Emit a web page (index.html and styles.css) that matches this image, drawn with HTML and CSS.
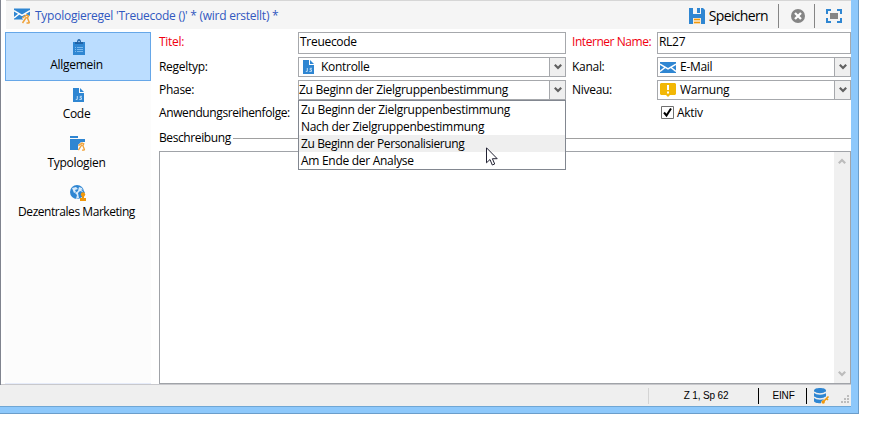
FILE: index.html
```html
<!DOCTYPE html>
<html lang="de">
<head>
<meta charset="utf-8">
<title>Typologieregel</title>
<link rel="stylesheet" href="styles.css">
</head>
<body>
<svg class="defs" width="0" height="0">
  <symbol id="tool" viewBox="0 0 9 10"><path d="M1 4 5 1l2 1-1 2 2 5M5 3 1 9M5 9h3" fill="none" stroke="#f0a33c" stroke-width="1.5"/></symbol>
  <symbol id="js" viewBox="0 0 11 14"><path d="M0 0h6v5h5v9H0z" fill="#2f86d2"/><path d="M7 0l4 4H7z" fill="#2f86d2"/><path d="M4.3 8v3.4H2.8M9 8.3H7.2v1.5h1.3v1.6H6.3" fill="none" stroke="#cfe6fa" stroke-width=".9"/></symbol>
  <symbol id="mail" viewBox="0 0 16 11"><path d="M0 0h16v11H0z" fill="#2f86d2"/><path d="M0 2.200l8 4.600 8-4.600M0 9.500l5-4M16 9.500l-5-4" fill="none" stroke="#fff" stroke-width="1.500"/></symbol>
  <symbol id="chev" viewBox="0 0 8 6"><path d="M.8.8 4 4 7.200.8" fill="none" stroke="currentColor" stroke-width="2.200"/></symbol>
</svg>
<div class="window">
  <div class="client">
    <header class="toolbar">
      <svg class="title-icon" width="17" height="16" viewBox="0 0 17 16"><use href="#mail" width="16" height="12"/><path d="M8 10l4-3 5 1v8h-5z" fill="#f5f5f5"/><use href="#tool" x="7.500" y="6" width="9" height="10"/></svg>
      <h1 class="title">Typologieregel 'Treuecode ()' * (wird erstellt) *</h1>
      <svg class="save-icon" width="16" height="16" viewBox="0 0 16 16"><path d="M0 0h4v6h8V0h2l2 2v14h-4v-6H4v6H0z" fill="#2f86d2"/><path d="M8 0h3v5H8z" fill="#2f86d2"/><path d="M4 10h8v6H4z" fill="#fbead0"/><path d="M5 11.500h6M5 14.500h6" stroke="#f0980c" stroke-width="1.400"/></svg>
      <span class="save">Speichern</span>
      <i class="divider"></i>
      <svg class="cancel" width="14" height="14" viewBox="0 0 14 14"><circle cx="7" cy="7" r="7" fill="#858585"/><path d="M4 4l6 6M10 4l-6 6" stroke="#fff" stroke-width="2.300"/></svg>
      <i class="divider"></i>
      <svg class="full" width="16" height="14" viewBox="0 0 16 14"><path d="M1 5V1h4M11 1h4v4M15 9v4h-4M5 13H1V9" fill="none" stroke="#2f86d2" stroke-width="2"/><path d="M4 4h8v6H4z" fill="#858585"/></svg>
    </header>
    <main class="body">
      <nav class="sidebar">
        <a class="nav on"><svg width="12" height="16" viewBox="0 0 12 16"><path d="M0 3h12v13H0z" fill="#2f86d2"/><path d="M2 3h2c0-4 4-4 4 0h2v2H2z" fill="#1f62a6"/><circle cx="6" cy="2.500" r=".8" fill="#bbddff"/><path d="M2 8.500h1M4 8.500h6M2 10.500h1M4 10.500h6M2 12.500h1M4 12.500h6" stroke="#7ab8ee"/></svg><span>Allgemein</span></a>
        <a class="nav"><svg width="11" height="14"><use href="#js"/></svg><span>Code</span></a>
        <a class="nav high"><svg width="16" height="15" viewBox="0 0 16 15"><path d="M0 0h8v2H0zM0 3h15v11H0z" fill="#2f86d2"/><path d="M8 9l3-3h5v9H8z" fill="#fcfcfc"/><use href="#tool" x="7.500" y="6" width="8" height="9"/></svg><span>Typologien</span></a>
        <a class="nav high"><svg width="16" height="16" viewBox="0 0 16 16"><circle cx="7" cy="7" r="7" fill="#2f86d2"/><path d="M2 3l4-1 2 2-3 1 1 2-2 1zM9 2l3 1 1 4-3-1-2 2 1 5-3 1 1-4-2-2 3-2z" fill="#d8eafa"/><path d="M11.500 5l3 2-1 1.500M3 9l2 2v2" stroke="#2f86d2" fill="none"/><circle cx="13" cy="9.500" r="2.200" fill="#f0980c"/><path d="M12 10h2v3h2v3h-6v-3h2z" fill="#f0980c"/></svg><span class="tight">Dezentrales Marketing</span></a>
      </nav>
      <section class="form">
        <div class="fields">
          <label class="req r1">Titel:</label>
          <div class="input">Treuecode</div>
          <label class="req r1 right tight">Interner Name:</label>
          <div class="input">RL27</div>

          <label>Regeltyp:</label>
          <div class="combo"><svg class="js" width="11" height="14"><use href="#js"/></svg><span class="val">Kontrolle</span><b><svg width="8" height="6"><use href="#chev"/></svg></b></div>
          <label class="right">Kanal:</label>
          <div class="combo"><svg class="ico" width="16" height="11"><use href="#mail"/></svg><span class="val">E-Mail</span><b><svg width="8" height="6"><use href="#chev"/></svg></b></div>

          <label>Phase:</label>
          <div class="combo open"><span class="val">Zu Beginn der Zielgruppenbestimmung</span><b><svg width="8" height="6"><use href="#chev"/></svg></b>
            <ul class="list"><li>Zu Beginn der Zielgruppenbestimmung</li><li>Nach der Zielgruppenbestimmung</li><li class="hot">Zu Beginn der Personalisierung</li><li>Am Ende der Analyse</li></ul>
            <svg class="cursor" width="12" height="19" viewBox="0 0 12 19"><path d="M.5.8v15l3.500-3.300 2.300 5.500 2.400-1-2.300-5.300h4.800z" fill="#fff" stroke="#223"/></svg>
          </div>
          <label class="right">Niveau:</label>
          <div class="combo"><svg class="ico" width="16" height="14" viewBox="0 0 16 14"><path d="M1 0h14l1 1v10l-1 1h-5l-2 2-2-2H1l-1-1V1z" fill="#f2b705"/><path d="M8 2v5M8 8.500v2" stroke="#fff" stroke-width="2"/></svg><span class="val">Warnung</span><b><svg width="8" height="6"><use href="#chev"/></svg></b></div>

          <label class="order">Anwendungsreihenfolge:</label>
          <div class="check"><svg width="13" height="13" viewBox="0 0 13 13"><path d="M.5.5h12v12H.5z" fill="#fff" stroke="#707070"/><path d="M3 6.500l2.500 3 4.500-7" fill="none" stroke="#000" stroke-width="2"/></svg><span>Aktiv</span></div>
        </div>
        <div class="legend"><span>Beschreibung</span><i></i></div>
        <div class="area"><div class="scroll"><svg class="up" width="8" height="6"><use href="#chev"/></svg><svg width="8" height="6"><use href="#chev"/></svg></div></div>
      </section>
    </main>
    <footer class="status">
      <span class="pos">Z 1, Sp 62</span><span class="mode">EINF</span>
      <svg class="db" width="16" height="16" viewBox="0 0 16 16"><path d="M0 2.500C0-.8 12-.8 12 2.500V13c0 3-12 3-12 0z" fill="#2f86d2"/><path d="M0 4c2 2.500 10 2.500 12 0M0 9c2 2.500 10 2.500 12 0" fill="none" stroke="#efefef" stroke-width="1.500"/><path d="M7 14l6-6h3v5l-5 3H7z" fill="#efefef"/><path d="M9 14l5.500-5.500M12.500 10.500l1.500 1.500" stroke="#f0980c" stroke-width="1.600"/><circle cx="9.200" cy="14" r="1.700" fill="#f0980c"/></svg>
      <svg class="grip" width="8" height="8" viewBox="0 0 8 8"><path d="M6 0h2v2H6zM3 3h2v2H3zM6 3h2v2H6zM0 6h2v2H0zM3 6h2v2H3zM6 6h2v2H6z" fill="#bcbcbc"/></svg>
    </footer>
  </div>
</div>
</body>
</html>
```
FILE: styles.css
```css
* { box-sizing: border-box; }
body { margin: 0; background: #fff; color: #000; font: 12px/16px "Open Sans", "Noto Sans", sans-serif; letter-spacing: -0.29px; overflow: hidden; }
svg { display: block; flex: none; }
.defs { position: absolute; }
.window { width: 859px; height: 414px; padding: 0 7px 7px 0; background: #8dc8fb; border: solid #6b9dca; border-width: 0 1px 1px 0; }
.client { width: 851px; height: 407px; display: flex; flex-direction: column; background: #fff; border-bottom: 1px solid #6fa6d4; }
.toolbar { display: flex; align-items: center; height: 29px; padding: 1px 9px 0 8px; margin-left: 6px; background: #f5f5f5; border-top: 1px solid #d6d6d6; position: relative; }
.toolbar::before { content: ""; position: absolute; left: -6px; top: -1px; width: 1px; height: 385px; background: #80848f; }
.title { margin: 0 auto 0 4px; font-size: 12px; font-weight: 400; color: #3158c0; white-space: nowrap; letter-spacing: -0.25px; }
.save { margin-left: 4px; margin-right: 10px; font-size: 14px; letter-spacing: -0.65px; }
.divider { width: 1px; height: 24px; background: #858585; }
.cancel { margin: 0 10px 0 12px; position: relative; }
.cancel + .divider { margin-left: -1px; }
.full { margin-left: 11px; }
.body { display: flex; height: 355px; padding-top: 3px; }
.sidebar { width: 146px; margin-left: 5px; height: 352px; background: #fcfcfc; border-bottom: 1px solid #e6ecfa; }
.nav { display: flex; flex-direction: column; align-items: center; height: 49px; padding-top: 7px; border: 0 solid transparent; }
.nav svg { margin-bottom: 2px; }
.nav span { margin-top: auto; margin-bottom: 8px; padding-right: 3px; }
.nav.high { padding-top: 6px; }
.nav.on { padding-top: 6px; background: #bbddff; border: 1px solid #66a7e8; }
.nav.on svg { margin-left: 2px; }
.form { width: 692px; margin-left: 8px; }
.fields { display: grid; grid-template-columns: 139px 268px 91px 194px; grid-template-rows: 22px 20px 20px 18px; row-gap: 3px; }
label { align-self: center; white-space: nowrap; }
.right { padding-left: 6px; }
.req { color: #f00010; }
.tight { letter-spacing: -0.45px; }
.order { letter-spacing: -0.39px; padding-top: 1px; }
.r1 { align-self: start; padding-top: 2px; }
.input { border: 1px solid #a6a8ac; padding: 1px 2px 1px 1px; }
.combo { position: relative; display: flex; align-items: center; border: 1px solid #a6a8ac; white-space: nowrap; }
.combo b { margin-left: auto; width: 16px; height: 18px; border-left: 1px solid #a6a8ac; background: #efefef; display: grid; place-items: center; color: #606060; }
.ico { margin: 0 4px 0 2px; }
.js { margin: 0 7px 0 4px; }
.list { position: absolute; z-index: 2; left: -1px; top: 19px; width: 268px; height: 70px; margin: 0; padding: 0; list-style: none; background: #fff; border: 1px solid #828790; }
.list li { height: 17px; line-height: 17px; padding-left: 2px; }
.list .hot { background: #efefef; letter-spacing: -0.38px; }
.cursor { position: absolute; z-index: 3; left: 187px; top: 66px; }
.check { grid-column: 4; display: flex; align-items: center; gap: 3px; padding: 1px 0 0 4px; }
.legend { display: flex; align-items: center; height: 16px; margin-top: 9px; }
.legend i { flex: 1; height: 1px; background: #a0a0a0; margin-left: 2px; }
.legend span { letter-spacing: -0.4px; }
.area { height: 233px; margin-top: 5px; border: 1px solid #a0a3a8; display: flex; justify-content: flex-end; }
.scroll { width: 16px; background: #f0f0f0; color: #bcbcbc; display: flex; flex-direction: column; align-items: center; justify-content: space-between; padding: 6px 0; }
.up { transform: rotate(180deg); }
.status { display: flex; align-items: center; height: 22px; background: #efefef; border-top: 1px solid #c8c8cc; font: 10px/16px "Liberation Sans", Arial, sans-serif; letter-spacing: -0.15px; }
.pos { width: 111px; margin-left: 648px; padding-left: 5px; border-left: 1px solid #d4d4d4; border-right: 1px solid #000; text-align: center; }
.mode { width: 48px; padding-left: 2px; border-right: 1px solid #000; text-align: center; }
.db { margin-left: 7px; }
.grip { margin: 6px 2px 0 auto; }
```
